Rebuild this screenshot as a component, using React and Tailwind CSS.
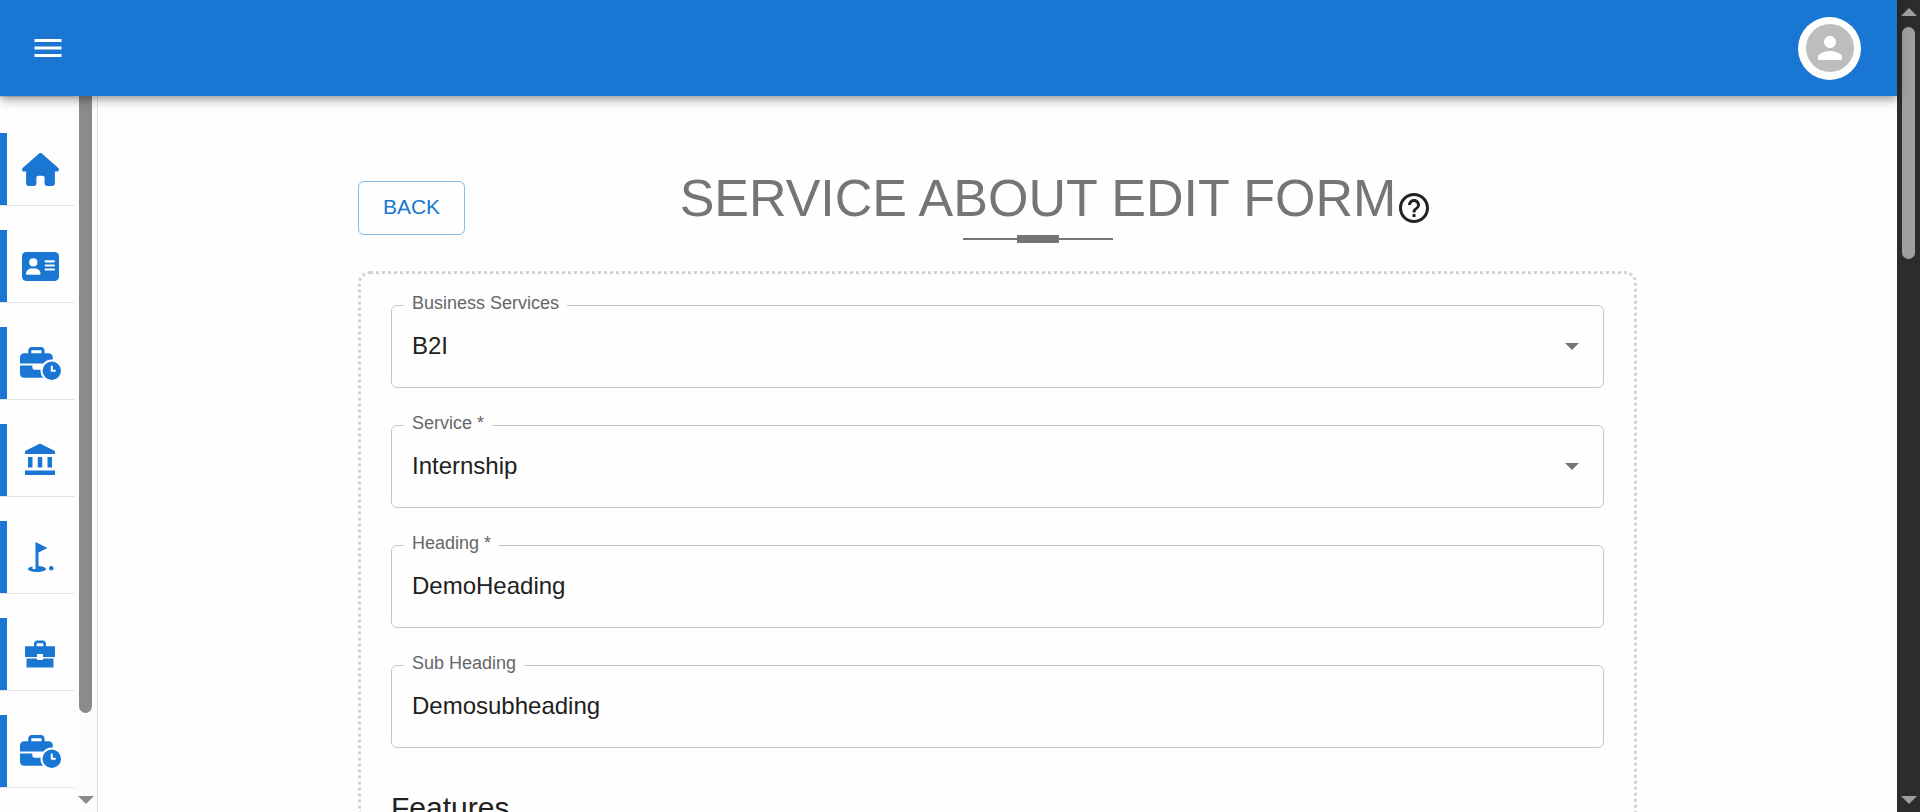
import React from "react";
import { FaHouse, FaAddressCard, FaBusinessTime } from "react-icons/fa6";

const BankIcon = () => (
  <svg viewBox="0 0 24 24" className="mr-px size-9" fill="currentColor" aria-hidden="true">
    <path d="M4 10h3v7H4zm6.5 0h3v7h-3zM2 19h20v3H2zm15-9h3v7h-3zm-5-9L2 6v2h20V6z" />
  </svg>
);

const GolfIcon = () => (
  <svg viewBox="0 0 24 24" className="mr-px size-9" fill="currentColor" aria-hidden="true">
    <circle cx="19.5" cy="19.5" r="1.5" />
    <path d="M17 5.92 9 2v18H7v-1.73c-1.79.35-3 .99-3 1.73 0 1.1 2.69 2 6 2s6-.9 6-2c0-.99-2.16-1.81-5-1.97V8.98z" />
  </svg>
);

const CaseIcon = () => (
  <svg viewBox="0 0 24 24" className="mr-px size-9" fill="currentColor" aria-hidden="true">
    <path d="M14 16h-4v-1H3v6h18v-6h-7z" />
    <path
      fillRule="evenodd"
      d="M2 6.800V14h8v-2h4v2h8V6.800h-6V5.200C16 3.900 15 3 13.800 3h-3.600C9 3 8 3.900 8 5.200v1.600zM9.700 6.800V5.400q0-.6.6-.6h3.400q.6 0 .6.600v1.400z"
    />
  </svg>
);

const navItems = [
  { name: "Home", icon: <FaHouse className="h-[33px] w-[37px]" /> },
  { name: "Contacts", icon: <FaAddressCard className="h-[33px] w-[37px]" /> },
  { name: "Business hours", icon: <FaBusinessTime className="h-[33px] w-[41px]" /> },
  { name: "Institutions", icon: <BankIcon /> },
  { name: "Goals", icon: <GolfIcon /> },
  { name: "Careers", icon: <CaseIcon /> },
  { name: "Business services", icon: <FaBusinessTime className="h-[33px] w-[41px]" /> },
];

const ArrowUp = () => (
  <svg viewBox="0 0 16 8" className="h-2 w-4" fill="currentColor" aria-hidden="true">
    <path d="M8 0l8 8H0z" />
  </svg>
);

const ArrowDown = ({ className = "h-2 w-4" }) => (
  <svg viewBox="0 0 16 8" className={className} fill="currentColor" aria-hidden="true">
    <path d="M0 0h16L8 8z" />
  </svg>
);

function Header() {
  return (
    <header className="relative z-10 flex h-24 shrink-0 items-center justify-between bg-[#1976d2] pr-9 pl-[30px] text-white shadow-[0_3px_6px_-1.5px_rgba(0,0,0,0.2),0_6px_8px_0_rgba(0,0,0,0.14),0_2px_15px_0_rgba(0,0,0,0.12)]">
      <button type="button" aria-label="Open menu">
        <svg viewBox="0 0 24 24" className="size-9" fill="currentColor" aria-hidden="true">
          <path d="M3 18h18v-2H3zm0-5h18v-2H3zm0-7v2h18V6z" />
        </svg>
      </button>
      <button type="button" aria-label="Account" className="flex size-[63px] items-center justify-center rounded-full bg-white">
        <span className="flex size-12 items-center justify-center rounded-full bg-[#bdbdbd]">
          <svg viewBox="0 0 24 24" className="size-9" fill="currentColor" aria-hidden="true">
            <path d="M12 12c2.210 0 4-1.790 4-4s-1.790-4-4-4-4 1.790-4 4 1.790 4 4 4m0 2c-2.670 0-8 1.340-8 4v2h16v-2c0-2.660-5.330-4-8-4" />
          </svg>
        </span>
      </button>
    </header>
  );
}

function Sidebar() {
  return (
    <aside className="flex shrink-0 border-r border-[#e0e0e0]">
      <nav className="flex w-[74px] flex-col gap-6 overflow-hidden border-t border-[#e0e0e0] pt-9">
        {navItems.map(({ name, icon }) => (
          <a
            key={name}
            href="#"
            aria-label={name}
            className="flex h-[73px] shrink-0 border-b border-[#e0e0e0] text-[#1976d2]"
          >
            <span className="w-[7px] bg-[#1976d2]" />
            <span className="flex flex-1 items-center justify-center">{icon}</span>
          </a>
        ))}
      </nav>
      <div className="flex w-[23px] flex-col items-center justify-between bg-[#fcfcfc] pb-2 text-[#8b8b8b]">
        <div className="h-[617px] w-[13px] rounded-b-full bg-[#8b8b8b]" />
        <ArrowDown />
      </div>
    </aside>
  );
}

function Field({ id, label, value, options }) {
  const control = "block h-[66px] w-full appearance-none bg-transparent px-5 pb-0.5 text-2xl text-[#212121] outline-none";
  return (
    <fieldset className="relative h-[92px] rounded-md border border-[#c4c4c4]">
      <legend className="ml-3 h-[18px] px-2 text-lg leading-[14px] text-[#666666]">
        <label htmlFor={id}>{label}</label>
      </legend>
      {options ? (
        <>
          <select id={id} defaultValue={value} className={control}>
            {options.map((option) => (
              <option key={option}>{option}</option>
            ))}
          </select>
          <span className="pointer-events-none absolute inset-y-0 right-6 flex items-center pb-0.5 text-[#757575]">
            <ArrowDown className="h-[7px] w-[14px]" />
          </span>
        </>
      ) : (
        <input id={id} type="text" defaultValue={value} className={control} />
      )}
    </fieldset>
  );
}

function PageScrollbar() {
  return (
    <div className="flex w-[23px] shrink-0 flex-col items-center bg-[#2c2c2c] py-2 text-[#9f9f9f]">
      <ArrowUp />
      <div className="mt-[11px] h-[232px] w-[13px] rounded-full bg-[#9f9f9f]" />
      <div className="mt-auto">
        <ArrowDown />
      </div>
    </div>
  );
}

export default function App() {
  return (
    <div className="flex h-screen overflow-hidden bg-[#fefefe] font-['Liberation_Sans',Arial,sans-serif]">
      <div className="flex min-w-0 flex-1 flex-col">
        <Header />
        <div className="flex min-h-0 flex-1">
          <Sidebar />
          <main className="min-w-0 flex-1 overflow-hidden">
            <div className="mx-auto max-w-[1279px] pt-[72px]">
              <div className="flex items-start">
                <button type="button" className="mt-[13px] h-[54px] w-[107px] rounded-md border border-[#8cbae8] pb-0.5 text-[21px] text-[#1976d2]">
                  BACK
                </button>
                <div className="flex flex-1 justify-center pl-2.5">
                  <div className="flex flex-col items-center">
                    <h1 className="text-[52px] leading-[60px] text-[#757575]">SERVICE ABOUT EDIT FORM</h1>
                    <div className="mt-[7px] flex items-center">
                      <span className="h-0.5 w-[54px] bg-[#757575]" />
                      <span className="h-2 w-[42px] bg-[#757575]" />
                      <span className="h-0.5 w-[54px] bg-[#757575]" />
                    </div>
                  </div>
                  <button type="button" aria-label="Help" className="mt-[22px] self-start text-[#212121]">
                    <svg viewBox="0 0 24 24" className="block size-9" fill="currentColor" aria-hidden="true">
                      <path d="M11 18h2v-2h-2zm1-16C6.480 2 2 6.480 2 12s4.480 10 10 10 10-4.480 10-10S17.520 2 12 2m0 18c-4.410 0-8-3.590-8-8s3.590-8 8-8 8 3.590 8 8-3.590 8-8 8m0-14c-2.210 0-4 1.790-4 4h2c0-1.100.9-2 2-2s2 .9 2 2c0 2-3 1.750-3 5h2c0-2.250 3-2.500 3-5 0-2.210-1.790-4-4-4" />
                    </svg>
                  </button>
                </div>
              </div>
              <form className="mt-7 rounded-xl border-[3px] border-dotted border-[#d3d3d3] px-[30px] pt-[22px] pb-12">
                <div className="flex flex-col gap-7">
                  <Field id="business" label="Business Services" value="B2I" options={["B2I", "B2B", "B2C"]} />
                  <Field id="service" label="Service *" value="Internship" options={["Internship", "Training"]} />
                  <Field id="heading" label="Heading *" value="DemoHeading" />
                  <Field id="subheading" label="Sub Heading" value="Demosubheading" />
                </div>
                <h2 className="mt-10 text-[30px] leading-10 text-[#212121]">Features</h2>
              </form>
            </div>
          </main>
        </div>
      </div>
      <PageScrollbar />
    </div>
  );
}
